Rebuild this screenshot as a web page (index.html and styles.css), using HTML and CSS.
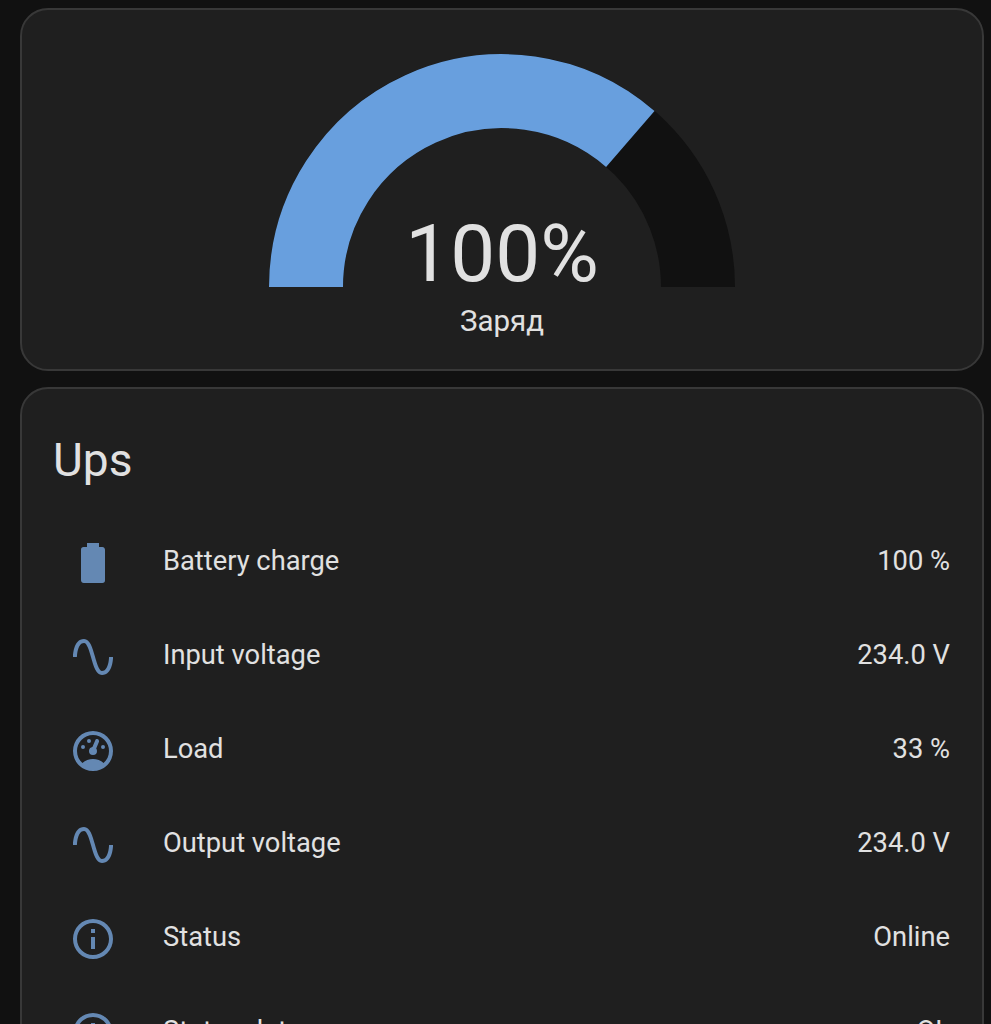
FILE: index.html
```html
<!DOCTYPE html>
<html lang="ru">
<head>
<meta charset="utf-8">
<title>Ups</title>
<link rel="stylesheet" href="styles.css">
</head>
<body>
<main class="view">
  <section class="card gauge-card">
    <div class="gauge">
      <svg class="gauge-svg" viewBox="0 0 466 233" width="466" height="233">
        <path class="gauge-track" d="M37 233A196 196 0 0 1 429 233"/>
        <path class="gauge-fill" d="M37 233A196 196 0 0 1 361.3 85"/>
      </svg>
      <div class="gauge-value">100%</div>
    </div>
    <div class="gauge-label">Заряд</div>
  </section>
  <section class="card entities">
    <h1 class="card-title">Ups</h1>
    <div class="rows">
      <div class="row">
        <svg class="icon" viewBox="0 0 24 24"><path d="M16.67,4H15V2H9V4H7.33A1.33,1.33 0 0,0 6,5.33V20.67C6,21.4 6.6,22 7.33,22H16.67A1.33,1.33 0 0,0 18,20.67V5.33C18,4.6 17.4,4 16.67,4Z"/></svg>
        <span class="name">Battery charge</span><span class="value">100 %</span>
      </div>
      <div class="row">
        <svg class="icon" viewBox="0 0 24 24"><path d="M16.5,21C13.5,21 12.31,16.76 11.05,12.28C10.14,9.04 9,5 7.5,5C4.11,5 4,11.93 4,12H2C2,11.63 2.06,3 7.5,3C10.5,3 11.71,7.25 12.97,11.74C13.83,14.8 15,19 16.5,19C19.94,19 20.03,12.07 20.03,12H22.03C22.03,12.37 21.97,21 16.5,21Z"/></svg>
        <span class="name">Input voltage</span><span class="value">234.0 V</span>
      </div>
      <div class="row">
        <svg class="icon" viewBox="0 0 24 24"><path d="M17.3,18C19,16.5 20,14.4 20,12A8,8 0 0,0 12,4A8,8 0 0,0 4,12C4,14.4 5,16.5 6.7,18C8.2,16.7 10,16 12,16C14,16 15.9,16.7 17.3,18M12,2A10,10 0 0,1 22,12A10,10 0 0,1 12,22A10,10 0 0,1 2,12A10,10 0 0,1 12,2M7,9A1,1 0 0,1 8,10A1,1 0 0,1 7,11A1,1 0 0,1 6,10A1,1 0 0,1 7,9M10,6A1,1 0 0,1 11,7A1,1 0 0,1 10,8A1,1 0 0,1 9,7A1,1 0 0,1 10,6M17,9A1,1 0 0,1 18,10A1,1 0 0,1 17,11A1,1 0 0,1 16,10A1,1 0 0,1 17,9M14.4,6.1C14.9,6.3 15.1,6.9 15,7.4L13.6,10.8C13.8,11.1 14,11.5 14,12A2,2 0 0,1 12,14A2,2 0 0,1 10,12C10,11 10.7,10.1 11.7,10L13.1,6.7C13.3,6.1 13.9,5.9 14.4,6.1Z"/></svg>
        <span class="name">Load</span><span class="value">33 %</span>
      </div>
      <div class="row">
        <svg class="icon" viewBox="0 0 24 24"><path d="M16.5,21C13.5,21 12.31,16.76 11.05,12.28C10.14,9.04 9,5 7.5,5C4.11,5 4,11.93 4,12H2C2,11.63 2.06,3 7.5,3C10.5,3 11.71,7.25 12.97,11.74C13.83,14.8 15,19 16.5,19C19.94,19 20.03,12.07 20.03,12H22.03C22.03,12.37 21.97,21 16.5,21Z"/></svg>
        <span class="name">Output voltage</span><span class="value">234.0 V</span>
      </div>
      <div class="row">
        <svg class="icon" viewBox="0 0 24 24"><path d="M11,9H13V7H11M12,20C7.59,20 4,16.41 4,12C4,7.59 7.59,4 12,4C16.41,4 20,7.59 20,12C20,16.41 16.41,20 12,20M12,2A10,10 0 0,0 2,12A10,10 0 0,0 12,22A10,10 0 0,0 22,12A10,10 0 0,0 12,2M11,17H13V11H11V17Z"/></svg>
        <span class="name">Status</span><span class="value">Online</span>
      </div>
      <div class="row">
        <svg class="icon" viewBox="0 0 24 24"><path d="M11,9H13V7H11M12,20C7.59,20 4,16.41 4,12C4,7.59 7.59,4 12,4C16.41,4 20,7.59 20,12C20,16.41 16.41,20 12,20M12,2A10,10 0 0,0 2,12A10,10 0 0,0 12,22A10,10 0 0,0 22,12A10,10 0 0,0 12,2M11,17H13V11H11V17Z"/></svg>
        <span class="name">Status data</span><span class="value">OL</span>
      </div>
    </div>
  </section>
</main>
</body>
</html>
```

FILE: styles.css
```css
html, body {
  margin: 0;
  height: 100%;
  overflow: hidden;
  background: #111111;
}
body {
  font-family: Roboto, "Noto Sans", sans-serif;
  color: #e1e1e1;
}
.view {
  display: flex;
  flex-direction: column;
  gap: 16px;
  padding: 8px 7px 0 20px;
}
.card {
  background: #1f1f1f;
  border: 2px solid #383838;
  border-radius: 28px;
  box-sizing: border-box;
}
.gauge-card {
  height: 363px;
  padding-top: 44px;
  display: flex;
  flex-direction: column;
  align-items: center;
}
.gauge {
  position: relative;
  width: 466px;
  height: 233px;
}
.gauge-svg {
  display: block;
  fill: none;
}
.gauge-track {
  stroke: #111111;
  stroke-width: 74;
}
.gauge-fill {
  stroke: #689fde;
  stroke-width: 74;
}
.gauge-value {
  position: absolute;
  left: 0;
  right: 0;
  bottom: -14px;
  text-align: center;
  font-size: 80px;
  line-height: 94px;
  color: #e1e1e1;
}
.gauge-label {
  margin-top: 17px;
  font-size: 29.5px;
  line-height: 34px;
}
.entities {
  padding: 41px 32px 0 32px;
  min-height: 700px;
}
.card-title {
  margin: 0 0 0 -1px;
  font-size: 46px;
  font-weight: 400;
  line-height: 60px;
}
.rows {
  display: flex;
  flex-direction: column;
  margin-top: 24px;
}
.row {
  display: flex;
  align-items: center;
  height: 94px;
}
.icon {
  width: 48px;
  height: 48px;
  margin: 4px 46px 0 15px;
  fill: #6488b3;
  flex: none;
}
.name {
  flex: 1;
  font-size: 27.3px;
  padding-bottom: 1px;
}
.value {
  font-size: 27.3px;
  padding-bottom: 1px;
}
```
